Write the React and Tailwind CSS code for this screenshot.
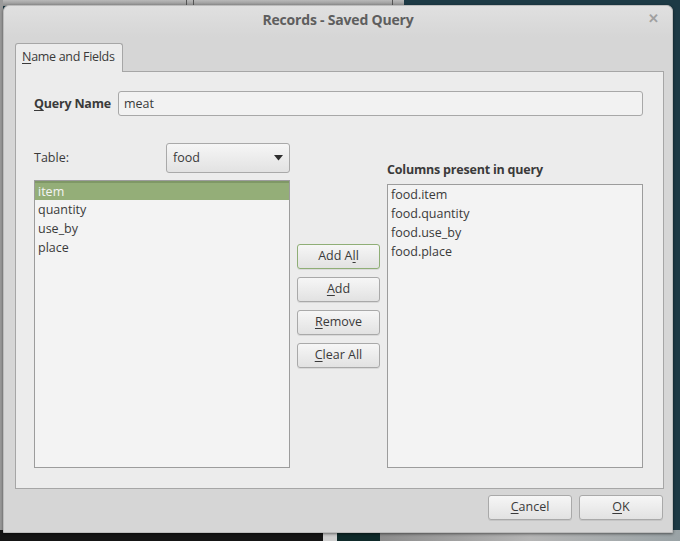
import React from "react";

const font = { fontFamily: '"Open Sans", "Noto Sans", sans-serif' };

function Btn({ children, focus, className = "" }) {
  return (
    <div
      className={
        "flex items-center justify-center rounded-[3px] border text-[12.5px] text-[#3a3a3a] bg-gradient-to-b from-[#f6f6f6] to-[#e2e2e2] shadow-[0_1px_0_rgba(0,0,0,0.08)] " +
        (focus ? "border-[#8fae76] " : "border-[#a9a9a9] ") +
        className
      }
    >
      {children}
    </div>
  );
}

const U = ({ children }) => <span className="underline underline-offset-2 decoration-1">{children}</span>;

export default function App() {
  return (
    <div className="relative w-[680px] h-[541px] overflow-hidden bg-[#1d3a45]" style={font}>
      {/* desktop background pieces */}
      <div className="absolute left-0 top-0 w-[404px] h-[6px] bg-gradient-to-b from-[#b9b9b9] to-[#8e8e8e]" />
      <div className="absolute left-[186px] top-0 w-[1px] h-[6px] bg-[#555]" />
      <div className="absolute left-[193px] top-0 w-[1px] h-[6px] bg-[#555]" />
      <div className="absolute left-[392px] top-0 w-[1px] h-[6px] bg-[#555]" />
      <div className="absolute left-0 top-[0px] w-[3px] h-[541px] bg-[#9a9a9a]" />
      <div className="absolute left-0 top-[530px] w-[323px] h-[11px] bg-[#151515]" />
      <div className="absolute left-[323px] top-[530px] w-[14px] h-[11px] bg-[#cfcfcf]" />
      <div className="absolute left-[337px] top-[530px] w-[43px] h-[11px] bg-[#0f2a2a]" />
      <div className="absolute left-[380px] top-[530px] w-[300px] h-[11px] bg-gradient-to-r from-[#8d8d8d] via-[#b5b5b5] to-[#9aa3a6]" />

      {/* window */}
      <div className="absolute left-[3px] top-[5px] w-[670px] h-[528px] rounded-t-[6px] bg-[#d6d6d6] border border-[#bcbcbc] shadow-[0_1px_3px_rgba(0,0,0,0.5)] flex flex-col">
        {/* title bar */}
        <div className="relative h-[31px] shrink-0 flex items-start justify-center pt-[3px] rounded-t-[6px] bg-gradient-to-b from-[#e0e0e0] to-[#d6d6d6]">
          <span className="text-[14px] font-bold text-[#5e5e5e] tracking-[-0.2px]">Records - Saved Query</span>
          <span className="absolute right-[13px] top-[3px] text-[13px] font-bold text-[#a0a0a0]">✕</span>
        </div>

        <div className="flex-1 flex flex-col pl-[11px] pr-[8px] pt-[6px]">
          {/* tab */}
          <div className="flex">
            <div className="relative z-10 h-[29px] w-[108px] border border-b-0 border-[#a6a6a6] rounded-t-[3px] bg-[#ececec] flex items-center pl-[6px] pb-[2px] text-[12.5px] text-[#3a3a3a] tracking-[-0.3px]">
              <span><U>N</U>ame and Fields</span>
            </div>
          </div>
          {/* panel */}
          <div className="-mt-[1px] h-[418px] border border-[#a6a6a6] bg-[#ececec] flex flex-col pl-[18px] pr-[20px] pt-[19px] pb-[20px] text-[12.5px] text-[#3a3a3a]">
            <div className="flex items-center h-[25px]">
              <span className="w-[84px] font-bold tracking-[-0.2px] pt-[1px]"><U>Q</U>uery Name</span>
              <div className="flex-1 h-[25px] rounded-[3px] border border-[#a8a8a8] bg-[#f2f2f2] flex items-center pl-[5px] pt-[1px]">meat</div>
            </div>

            <div className="mt-[27px] flex-1 flex gap-[7px]">
              {/* left column */}
              <div className="w-[256px] flex flex-col">
                <div className="flex items-center h-[30px]">
                  <span className="w-[132px]">Table:</span>
                  <div className="w-[124px] h-[30px] rounded-[3px] border border-[#a9a9a9] bg-gradient-to-b from-[#f6f6f6] to-[#e2e2e2] flex items-center justify-between pl-[6px] pr-[6px]">
                    <span>food</span>
                    <svg width="9" height="6" viewBox="0 0 9 6"><path d="M0 0 H9 L4.5 5.5 Z" fill="#2e2e2e" /></svg>
                  </div>
                </div>
                <div className="mt-[7px] flex-1 border border-[#9c9c9c] bg-[#f3f3f3] flex flex-col">
                  <div className="h-[19px] bg-[#94ae78] border-t-2 border-[#7f9866] text-[#f4f4f4] pl-[3px] pt-[1px] flex items-center">item</div>
                  <div className="h-[19px] pl-[3px] pt-[1px] flex items-center">quantity</div>
                  <div className="h-[19px] pl-[3px] pt-[1px] flex items-center">use_by</div>
                  <div className="h-[19px] pl-[3px] pt-[1px] flex items-center">place</div>
                </div>
              </div>

              {/* middle */}
              <div className="w-[83px] flex flex-col justify-center gap-[8px]">
                <Btn focus className="h-[25px]">Add A<U>l</U>l</Btn>
                <Btn className="h-[25px]"><U>A</U>dd</Btn>
                <Btn className="h-[25px]"><U>R</U>emove</Btn>
                <Btn className="h-[25px]"><U>C</U>lear All</Btn>
              </div>

              {/* right column */}
              <div className="w-[256px] flex flex-col">
                <div className="mt-[19px] h-[16px] flex items-center font-bold tracking-[-0.2px]">Columns present in query</div>
                <div className="mt-[6px] flex-1 border border-[#9c9c9c] bg-[#f3f3f3] flex flex-col pt-[1px]">
                  <div className="h-[19px] pl-[3px] flex items-center">food.item</div>
                  <div className="h-[19px] pl-[3px] flex items-center">food.quantity</div>
                  <div className="h-[19px] pl-[3px] flex items-center">food.use_by</div>
                  <div className="h-[19px] pl-[3px] flex items-center">food.place</div>
                </div>
              </div>
            </div>
          </div>

          {/* bottom buttons */}
          <div className="mt-[6px] flex justify-end gap-[7px] pr-[1px]">
            <Btn className="w-[84px] h-[25px]"><U>C</U>ancel</Btn>
            <Btn className="w-[84px] h-[25px]"><U>O</U>K</Btn>
          </div>
        </div>
      </div>
    </div>
  );
}
